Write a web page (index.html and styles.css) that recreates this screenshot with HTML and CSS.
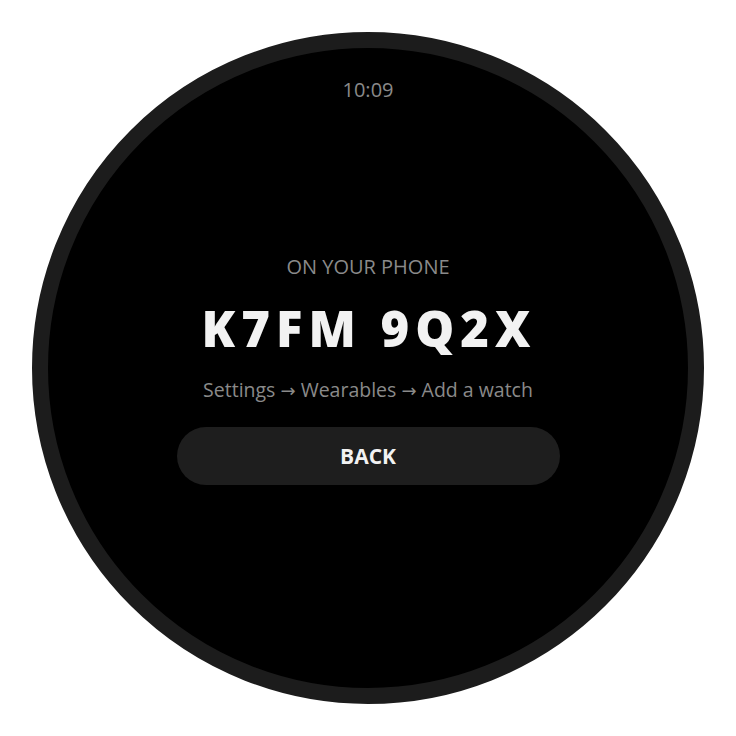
FILE: index.html
```html
<!DOCTYPE html>
<html lang="en">
<head>
<meta charset="utf-8">
<title>Pair watch</title>
<link rel="stylesheet" href="styles.css">
</head>
<body>
<div class="watch">
  <div class="status">10:09</div>
  <div class="content">
    <div class="label">ON YOUR PHONE</div>
    <div class="code">K7FM 9Q2X</div>
    <div class="hint">Settings <span class="arrow">→</span> Wearables <span class="arrow">→</span> Add a watch</div>
    <button class="back">BACK</button>
  </div>
  <div class="spacer"></div>
</div>
</body>
</html>
```

FILE: styles.css
```css
html, body {
  margin: 0;
  padding: 0;
  background: #ffffff;
}
body {
  padding: 32px;
  font-family: "Open Sans", "Noto Sans", sans-serif;
}
.watch {
  box-sizing: border-box;
  width: 672px;
  height: 672px;
  border-radius: 50%;
  background: #000000;
  border: 16px solid #1c1c1c;
  display: grid;
  grid-template-rows: 1fr auto 1fr;
  justify-items: center;
}
.status {
  align-self: start;
  padding-top: 30px;
  font-size: 20px;
  line-height: 24px;
  color: #8a8a8a;
}
.content {
  display: flex;
  flex-direction: column;
  align-items: center;
  margin-top: 3px;
}
.label {
  font-size: 20px;
  line-height: 24px;
  color: #8a8a8a;
  font-weight: 500;
}
.code {
  margin-top: 21px;
  padding-left: 2px;
  font-size: 49px;
  line-height: 56px;
  font-weight: 800;
  letter-spacing: 6px;
  color: #f2f2f2;
}
.hint {
  margin-top: 20px;
  font-size: 19.5px;
  line-height: 28px;
  color: #8a8a8a;
}
.arrow {
  font-family: "DejaVu Sans", sans-serif;
  font-size: 18px;
  line-height: 1;
}
.back {
  margin-top: 23px;
  width: 383px;
  height: 58px;
  border: none;
  border-radius: 29px;
  background: #1e1e1e;
  color: #f2f2f2;
  font-family: inherit;
  font-size: 21px;
  font-weight: 700;
  padding: 0;
}
```
